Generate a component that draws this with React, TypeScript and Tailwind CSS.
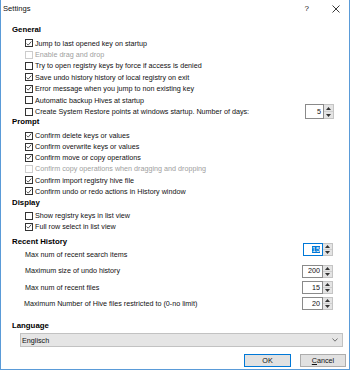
import React from "react";

type CheckProps = { label: string; checked?: boolean; disabled?: boolean; h?: string };

const CheckRow = ({ label, checked, disabled, h = "h-[11.4px]" }: CheckProps) => (
	<div className={`flex items-center pl-[23.5px] ${h}`}>
		<div
			className={`flex h-[8px] w-[8px] shrink-0 items-center justify-center border bg-white ${
				disabled ? "border-[#cccccc]" : "border-[#333333]"
			}`}
		>
			{checked && (
				<svg width="7" height="7" viewBox="0 0 7 7">
					<polyline points="0.8,3.6 2.6,5.4 6.2,1.2" fill="none" stroke="#222" strokeWidth="0.9" />
				</svg>
			)}
		</div>
		<span className={`ml-[2.5px] whitespace-nowrap ${disabled ? "text-[#a0a0a0]" : "text-[#111]"}`}>{label}</span>
	</div>
);

const Heading = ({ children, className = "" }: { children: React.ReactNode; className?: string }) => (
	<div className={`flex h-[10px] items-center pl-[11px] text-[7.8px] font-bold text-black ${className}`}>{children}</div>
);

const Spin = ({ value, active, w = "w-[21px]", h = "h-[13px]" }: { value: string; active?: boolean; w?: string; h?: string }) => (
	<div className={`flex ${h}`}>
		<div
			className={`flex ${w} items-center justify-end border bg-white pr-[2px] ${
				active ? "border-[#0078d7]" : "border-[#8a8a8a]"
			}`}
		>
			<span className={active ? "bg-[#0078d7] text-white" : "text-[#111]"}>{value}</span>
		</div>
		<div className="flex w-[10px] flex-col border-y border-r border-[#c4c4c4] bg-[#e4e4e4]">
			<div className="flex flex-1 items-center justify-center border-b border-[#cfcfcf]">
				<svg width="5" height="3" viewBox="0 0 5 3">
					<polygon points="2.5,0 5,3 0,3" fill="#333" />
				</svg>
			</div>
			<div className="flex flex-1 items-center justify-center">
				<svg width="5" height="3" viewBox="0 0 5 3">
					<polygon points="0,0 5,0 2.5,3" fill="#333" />
				</svg>
			</div>
		</div>
	</div>
);

const HistRow = ({ label, value, indent = "pl-[23px]" }: { label: string; value: string; indent?: string }) => (
	<div className="flex h-[16.4px] items-center justify-between pr-[16px]">
		<span className={`${indent} whitespace-nowrap text-[#111]`}>{label}</span>
		<Spin value={value} />
	</div>
);

export default function App() {
	return (
		<div className="flex h-[370px] w-[350px] flex-col border-x border-b border-[#5a9bd8] bg-white font-['Liberation_Sans',Arial,sans-serif] text-[7.2px] leading-none">
			{/* title bar */}
			<div className="flex h-[18px] items-center pl-[2px] pr-[9px] text-[7.6px] text-[#111]">
				<span>Settings</span>
				<span className="ml-auto text-[8px]">?</span>
				<svg className="ml-[23px]" width="8" height="8" viewBox="0 0 8 8">
					<path d="M0.5 0.5 L7.5 7.5 M7.5 0.5 L0.5 7.5" stroke="#222" strokeWidth="0.9" />
				</svg>
			</div>

			{/* General */}
			<Heading className="mt-[6px] h-[12px]">General</Heading>
			<div className="mt-[1.6px] flex flex-col">
				<CheckRow label="Jump to last opened key on startup" checked />
				<CheckRow label="Enable drag and drop" disabled />
				<CheckRow label="Try to open registry keys by force if access is denied" />
				<CheckRow label="Save undo history history of local registry on exit" checked />
				<CheckRow label="Error message when you jump to non existing key" checked />
				<CheckRow label="Automatic backup Hives at startup" />
				<div className="flex h-[11.4px] items-center justify-between pr-[15px]">
					<CheckRow label="Create System Restore points at windows startup. Number of days:" />
					<Spin value="5" w="w-[19px]" h="h-[15px]" />
				</div>
			</div>

			{/* Prompt */}
			<Heading>Prompt</Heading>
			<div className="mt-[2.6px] flex flex-col">
				<CheckRow h="h-[11.2px]" label="Confirm delete keys or values" checked />
				<CheckRow h="h-[11.2px]" label="Confirm overwrite keys or values" checked />
				<CheckRow h="h-[11.2px]" label="Confirm move or copy operations" checked />
				<CheckRow h="h-[11.2px]" label="Confirm copy operations when dragging and dropping" disabled />
				<CheckRow h="h-[11.2px]" label="Confirm import registry hive file" checked />
				<CheckRow h="h-[11.2px]" label="Confirm undo or redo actions in History window" checked />
			</div>

			{/* Display */}
			<Heading className="mt-[1px]">Display</Heading>
			<div className="mt-[2.1px] flex flex-col">
				<CheckRow h="h-[11.2px]" label="Show registry keys in list view" />
				<CheckRow h="h-[11.2px]" label="Full row select in list view" checked />
			</div>

			{/* Recent History */}
			<div className="mt-[4.5px] flex items-start justify-between pr-[16px]">
				<div className="flex flex-col">
					<Heading>Recent History</Heading>
					<div className="mt-[2.7px] flex h-[10px] items-center pl-[24px] text-[#111]">Max num of recent search items</div>
				</div>
				<div className="mt-[6px]">
					<Spin value="15" active w="w-[20px]" />
				</div>
			</div>
			<div className="mt-[3.2px] flex flex-col">
				<HistRow label="Maximum size of undo history" value="200" indent="pl-[24px]" />
				<HistRow label="Max num of recent files" value="15" indent="pl-[24px]" />
				<HistRow label="Maximum Number of Hive files restricted to (0-no limit)" value="20" />
			</div>

			{/* Language */}
			<Heading className="mt-[9.3px]">Language</Heading>
			<div className="ml-[19px] mt-[1.6px] flex h-[14.4px] w-[323px] items-center border border-[#c2c2c2] bg-[#e5e5e5] pl-[1px] pr-[4px] text-[#111]">
				<span>Englisch</span>
				<svg className="ml-auto" width="6" height="4" viewBox="0 0 6 4">
					<polyline points="0.5,0.5 3,3.2 5.5,0.5" fill="none" stroke="#555" strokeWidth="0.8" />
				</svg>
			</div>

			{/* buttons */}
			<div className="mt-[6.6px] flex justify-end gap-[9px] pr-[3px]">
				<button className="flex h-[13px] w-[47px] items-center justify-center border border-[#0078d7] bg-[#e1e1e1] text-[#111]">
					OK
				</button>
				<button className="flex h-[13px] w-[46px] items-center justify-center border border-[#adadad] bg-[#e1e1e1] text-[#111]">
					<span className="underline">C</span>ancel
				</button>
			</div>
		</div>
	);
}
